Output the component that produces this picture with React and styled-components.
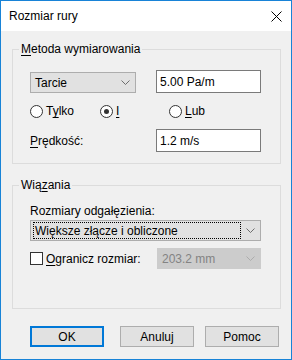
import styled, { createGlobalStyle } from "styled-components";

const Global = createGlobalStyle`
  html, body {
    margin: 0;
    padding: 0;
    background: #ffffff;
  }
  * {
    box-sizing: border-box;
  }
`;

const Window = styled.div`
  width: 292px;
  height: 360px;
  border: 1px solid #1883d7;
  background: #f0f0f0;
  font-family: "Liberation Sans", Arial, sans-serif;
  font-size: 12px;
  color: #000;
  display: flex;
  flex-direction: column;
`;

const TitleBar = styled.div`
  height: 30px;
  background: #ffffff;
  display: flex;
  align-items: center;
  justify-content: space-between;
  padding: 0 9px 0 8px;
  flex-shrink: 0;
`;

const Title = styled.span`
  font-size: 12px;
  color: #000;
`;

const Body = styled.div`
  flex: 1;
  display: flex;
  flex-direction: column;
  padding: 11px 10px 0 11px;
`;

const Group = styled.fieldset`
  margin: 0;
  border: 1px solid #dcdcdc;
  padding: ${(p) => p.$pad};
  height: ${(p) => p.$h}px;
  margin-bottom: ${(p) => p.$mb || 0}px;
  display: flex;
  flex-direction: column;
`;

const Legend = styled.legend`
  padding: 0 2px;
  margin-left: -11px;
  line-height: 14px;
`;

const U = styled.span`
  text-decoration: underline;
  text-underline-offset: 2px;
`;

const Row = styled.div`
  display: flex;
  align-items: ${(p) => p.$align || "center"};
  margin-top: ${(p) => p.$mt || 0}px;
`;

const Select = styled.div`
  width: ${(p) => p.$w}px;
  height: 21px;
  border: 1px solid ${(p) => (p.$disabled ? "#cccccc" : "#adadad")};
  background: ${(p) => (p.$disabled ? "#cccccc" : "#e1e1e1")};
  color: ${(p) => (p.$disabled ? "#838383" : "#000")};
  display: flex;
  align-items: center;
  justify-content: space-between;
  padding: 0 5px 0 3px;
  flex-shrink: 0;
`;

const FocusText = styled.span`
  flex: 1;
  height: 15px;
  display: flex;
  align-items: center;
  padding-left: 1px;
  margin-right: 6px;
  outline: ${(p) => (p.$focus ? "1px dotted #000" : "none")};
`;

const Input = styled.div`
  width: 105px;
  height: 23px;
  border: 1px solid #7a7a7a;
  background: #ffffff;
  display: flex;
  align-items: center;
  padding-left: 3px;
  margin-left: auto;
  margin-right: 1px;
`;

const Choice = styled.label`
  display: flex;
  align-items: center;
  width: ${(p) => p.$w}px;
  gap: 3px;
`;

const RadioDot = styled.span`
  width: 13px;
  height: 13px;
  border-radius: 50%;
  border: 1px solid #333333;
  background: #ffffff;
  display: flex;
  align-items: center;
  justify-content: center;
  &::after {
    content: "";
    width: 5px;
    height: 5px;
    border-radius: 50%;
    background: ${(p) => (p.$on ? "#333333" : "transparent")};
  }
`;

const Box = styled.span`
  width: 13px;
  height: 13px;
  border: 1px solid #333333;
  background: #ffffff;
  flex-shrink: 0;
`;

const Label = styled.div`
  line-height: 15px;
`;

const Footer = styled.div`
  display: flex;
  margin-top: 17px;
  padding-left: 18px;
`;

const Button = styled.div`
  width: 74px;
  height: 21px;
  margin-right: ${(p) => p.$mr || 0}px;
  border: ${(p) => (p.$def ? "2px solid #0078d7" : "1px solid #adadad")};
  background: #e1e1e1;
  display: flex;
  align-items: center;
  justify-content: center;
`;

const Chevron = ({ color = "#606060" }) => (
  <svg width="9" height="5" viewBox="0 0 9 5">
    <path d="M0.5 0.5 L4.5 4.5 L8.5 0.5" fill="none" stroke={color} strokeWidth="0.9" />
  </svg>
);

const CloseIcon = () => (
  <svg width="11" height="11" viewBox="0 0 11 11">
    <path d="M0.5 0.5 L10.5 10.5 M10.5 0.5 L0.5 10.5" stroke="#000" strokeWidth="1" />
  </svg>
);

export default function App() {
  return (
    <>
      <Global />
      <Window>
        <TitleBar>
          <Title>Rozmiar rury</Title>
          <CloseIcon />
        </TitleBar>
        <Body>
          <Group $pad="14px 18px 0 17px" $h={122} $mb={14}>
            <Legend>
              <U>M</U>etoda wymiarowania
            </Legend>
            <Row $align="flex-end">
              <Select $w={106}>
                <FocusText>Tarcie</FocusText>
                <Chevron />
              </Select>
              <Input>5.00 Pa/m</Input>
            </Row>
            <Row $mt={11}>
              <Choice $w={70}>
                <RadioDot />
                <span>
                  T<U>y</U>lko
                </span>
              </Choice>
              <Choice $w={69}>
                <RadioDot $on />
                <U>I</U>
              </Choice>
              <Choice $w={80}>
                <RadioDot />
                <span>
                  <U>L</U>ub
                </span>
              </Choice>
            </Row>
            <Row $mt={11}>
              <span>
                <U>P</U>rędkość:
              </span>
              <Input>1.2 m/s</Input>
            </Row>
          </Group>
          <Group $pad="12px 18px 0 17px" $h={131}>
            <Legend>
              Wią<U>z</U>ania
            </Legend>
            <Label>Rozmiary odgałęzienia:</Label>
            <Row $mt={1}>
              <Select $w={231}>
                <FocusText $focus>Większe złącze i obliczone</FocusText>
                <Chevron />
              </Select>
            </Row>
            <Row $mt={7}>
              <Choice $w={127}>
                <Box />
                <span>
                  <U>O</U>granicz rozmiar:
                </span>
              </Choice>
              <Select $w={104} $disabled>
                <FocusText>203.2 mm</FocusText>
                <Chevron color="#a8a8a8" />
              </Select>
            </Row>
          </Group>
          <Footer>
            <Button $def $mr={16}>OK</Button>
            <Button $mr={11}>Anuluj</Button>
            <Button>Pomoc</Button>
          </Footer>
        </Body>
      </Window>
    </>
  );
}
